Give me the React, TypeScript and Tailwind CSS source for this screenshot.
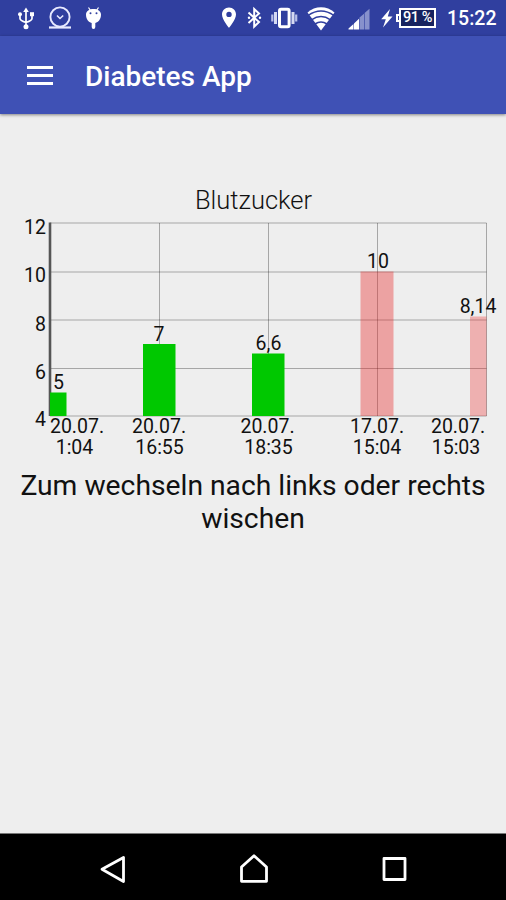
const gridX = [50, 159.5, 268.5, 377.5, 486.5];

const yAxis = [
  { label: "12", line: 223, text: 233.5 },
  { label: "10", line: 272, text: 282 },
  { label: "8", line: 320, text: 330.5 },
  { label: "6", line: 368.5, text: 378.5 },
  { label: "4", line: 416, text: 426 }
];

const bars = [
  { value: "5", x: 50, width: 16.5, top: 392.5, labelX: 58.5, color: "#00c800", opacity: 1 },
  { value: "7", x: 143, width: 32.5, top: 344, labelX: 159, color: "#00c800", opacity: 1 },
  { value: "6,6", x: 252, width: 32.5, top: 353.5, labelX: 268.5, color: "#00c800", opacity: 1 },
  { value: "10", x: 360.5, width: 33, top: 271.5, labelX: 378, color: "#e82020", opacity: 0.37 },
  { value: "8,14", x: 470, width: 16.5, top: 316.5, labelX: 478, color: "#f03030", opacity: 0.32 }
];

const dates = [
  { day: "20.07.", time: "1:04", x: 77, timeX: 74.5 },
  { day: "20.07.", time: "16:55", x: 159, timeX: 159.5 },
  { day: "20.07.", time: "18:35", x: 267.5, timeX: 268.5 },
  { day: "17.07.", time: "15:04", x: 377, timeX: 377 },
  { day: "20.07.", time: "15:03", x: 458, timeX: 456 }
];

function StatusIcons() {
  return (
    <>
      {/* usb */}
      <svg className="ml-[17px] h-[36px] w-[18px]" viewBox="17 0 18 36" fill="none" stroke="#fff" strokeWidth="1.7">
        <path d="M26 11v16M20 14v4.5q0 2 6 4M32 14v4.5q0 2-6 4" />
        <path d="M23.2 12 26 7.5l2.8 4.5z" fill="#fff" stroke="none" />
        <circle cx="26" cy="26.8" r="2.5" fill="#fff" stroke="none" />
        <circle cx="20" cy="14.3" r="2" fill="#fff" stroke="none" />
        <path d="M30 12.2h4v4h-4z" fill="#fff" stroke="none" />
      </svg>

      {/* alarm clock */}
      <svg className="ml-[13px] h-[36px] w-[24px]" viewBox="48 0 24 36" fill="none" stroke="#e8eaff" strokeWidth="1.9">
        <circle cx="60" cy="17" r="9.6" />
        <path d="M49 27.5h22" strokeWidth="2.2" />
        <path d="m57 15.5 3 3 3.2-3" strokeWidth="1.6" />
      </svg>

      {/* android debugging */}
      <svg className="ml-[12px] h-[36px] w-[20px]" viewBox="84 0 20 36" fill="#fff">
        <path d="m88.500 7.500 2 3M98.500 7.500l-2 3" stroke="#fff" strokeWidth="1.200" />
        <path d="M86 14.500C86 11 89.500 9 93.500 9s7.500 2 7.500 5.500c0 4.500-2.600 8-5.700 8.400V27q0 2-1.800 2t-1.800-2v-4.100c-3.100-.4-5.700-3.900-5.700-8.400" />
        <circle cx="90.500" cy="13.300" r="1" fill="#303f9f" />
        <circle cx="96.500" cy="13.300" r="1" fill="#303f9f" />
      </svg>
    </>
  );
}

function SystemIcons() {
  return (
    <>
      {/* location */}
      <svg className="h-[36px] w-[16px]" viewBox="221 0 16 36" fill="#fff">
        <path fillRule="evenodd" d="M229 7.500c-4 0-7 3-7 6.900 0 5 7 13.300 7 13.300s7-8.300 7-13.300c0-3.900-3-6.900-7-6.900m0 4.200a2.700 2.700 0 1 1 0 5.400 2.700 2.700 0 0 1 0-5.400" />
      </svg>

      {/* bluetooth */}
      <svg className="ml-[9px] h-[36px] w-[16px]" viewBox="246 0 16 36" fill="none" stroke="#fff" strokeWidth="2">
        <path d="m248.500 12.500 10.500 9.500-4.800 4.700V9l4.800 4.500-10.500 9.500" />
        <circle cx="249" cy="17.700" r="1.200" fill="#fff" stroke="none" />
        <circle cx="260" cy="17.700" r="1.200" fill="#fff" stroke="none" />
      </svg>

      {/* vibrate */}
      <svg className="ml-[8px] h-[36px] w-[28px]" viewBox="270 0 28 36">
        <rect x="279.500" y="9.300" width="9.600" height="17.400" rx="1.500" fill="none" stroke="#fff" strokeWidth="3" />
        <path d="M275.500 12v12M293 12v12" stroke="#d5d9f2" strokeWidth="3" />
        <path d="M272.300 14.500v7M296.200 14.500v7" stroke="#b8bfe8" strokeWidth="2.200" />
      </svg>

      {/* wifi */}
      <svg className="ml-[9px] h-[36px] w-[28px]" viewBox="307 0 28 36">
        <path d="M321 30.500 307.500 12.500C315 5.500 327 5.500 334.500 12.500z" fill="#fff" />
        <path d="M308 15.500q13-9 26 0M311.500 19.800q9.500-6.500 19 0M315 24q6-3.800 12 0" fill="none" stroke="#303f9f" strokeWidth="1.500" />
      </svg>

      {/* signal strength */}
      <svg className="ml-[13px] h-[36px] w-[22px]" viewBox="348 0 22 36">
        <path d="M348.500 29.500v-1l5-4.500v5.500zM354 29.500v-6l5-4.700v10.700z" fill="#fff" />
        <path d="M359.500 29.500v-12l4.500-3.700v15.700zM364.600 29.500V13l4.900-4.300v20.800z" fill="#8791cc" />
      </svg>

      {/* charging */}
      <svg className="ml-[11px] h-[36px] w-[12px]" viewBox="381 0 12 36" fill="#fff">
        <path d="m390 9-8.800 10.300h4.600L383 27.500l9.500-11h-4.700z" />
      </svg>

      <div className="ml-[3px] h-[8px] w-[3px] border-y-2 border-l-2 border-white" />
      <div className="flex h-[20px] w-[37px] items-center justify-center whitespace-nowrap border-2 border-white bg-[#17225f] text-[14.5px] font-medium leading-none tracking-[-0.5px]">
        91 %
      </div>
    </>
  );
}

function Chart() {
  return (
    <svg className="block h-[280px] w-full" viewBox="0 180 506 280" fill="#111">
      <text x="253.500" y="208.500" textAnchor="middle" fontSize="25.500" fontWeight="300" textLength="117">
        Blutzucker
      </text>

      {/* grid */}
      <g stroke="#000" strokeOpacity="0.3" strokeWidth="1">
        {gridX.slice(1).map((x) => (
          <path key={x} d={`M${x} 223V416`} />
        ))}
        {yAxis.map((row) => (
          <path key={row.label} d={`M50 ${row.line}H486.500`} />
        ))}
      </g>
      <path d="M50 222.500V416" stroke="#555" strokeWidth="2.600" />

      {bars.map((bar) => (
        <rect
          key={bar.value}
          x={bar.x}
          y={bar.top}
          width={bar.width}
          height={416 - bar.top}
          fill={bar.color}
          fillOpacity={bar.opacity}
        />
      ))}

      <g fontSize="19.500">
        {yAxis.map((row) => (
          <text key={row.label} x="46" y={row.text} textAnchor="end">
            {row.label}
          </text>
        ))}
        {bars.map((bar) => (
          <text key={bar.value} x={bar.labelX} y={bar.top - 3.5} textAnchor="middle">
            {bar.value}
          </text>
        ))}
        {dates.map((date) => (
          <g key={date.x} textAnchor="middle">
            <text x={date.x} y="432.500">{date.day}</text>
            <text x={date.timeX} y="454">{date.time}</text>
          </g>
        ))}
      </g>
    </svg>
  );
}

export default function App() {
  return (
    <div className="flex h-[900px] w-[506px] flex-col overflow-hidden bg-[#eeeeee] font-['Roboto',sans-serif]">

      {/* STATUS BAR */}
      <div className="flex h-[36px] shrink-0 items-center bg-[#303f9f] text-white">
        <StatusIcons />
        <div className="ml-auto flex items-center pr-[9px]">
          <SystemIcons />
          <span className="ml-[11px] w-[50px] whitespace-nowrap pt-[2px] text-[19.500px] font-medium leading-none">15:22</span>
        </div>
      </div>

      {/* APP BAR */}
      <header className="flex h-[78px] shrink-0 items-center bg-[#3f51b5] text-white shadow-[0_1px_3px_rgba(0,0,0,0.45)]">
        <div className="ml-[27px] flex w-[26px] flex-col gap-[5px]">
          <div className="h-[3px] bg-white" />
          <div className="h-[3px] bg-white" />
          <div className="h-[3px] bg-white" />
        </div>
        <h1 className="ml-[32px] pt-[4px] text-[28px] font-medium leading-none">Diabetes App</h1>
      </header>

      {/* CONTENT */}
      <main className="flex-1 pt-[66px]">
        <Chart />
        <p className="mt-[9px] text-center text-[28.250px] leading-[33px] text-[#111]">
          Zum wechseln nach links oder rechts wischen
        </p>
      </main>

      {/* NAVIGATION BAR */}
      <nav className="flex h-[67px] shrink-0 items-center justify-center border-t border-[#777] bg-black">
        <svg className="h-[66px] w-[310px]" viewBox="98 834 310 66" fill="none" stroke="#fff" strokeWidth="2.800" strokeLinejoin="round">
          <path d="M123.500 857.500v24L102 869.300z" />
          <path d="M241.500 881.300V867l12.500-11.300L266.500 867v14.300z" />
          <rect x="384" y="858.500" width="21" height="21" />
        </svg>
      </nav>

    </div>
  );
}
